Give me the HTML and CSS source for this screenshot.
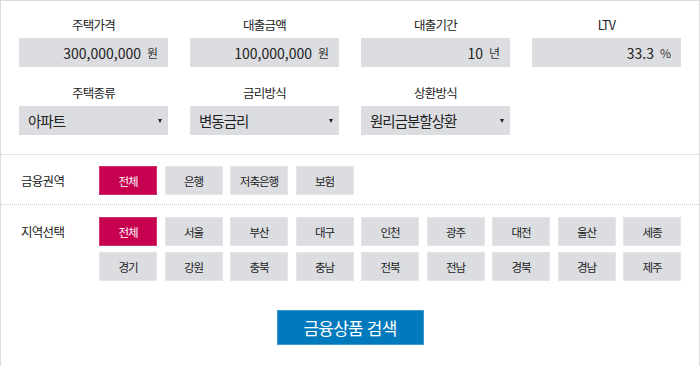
FILE: index.html
```html
<!DOCTYPE html>
<html lang="ko">
<head>
    <meta charset="UTF-8">
    <meta name="viewport" content="width=device-width, initial-scale=1.0">
    <title>대출 상품 검색</title>
    <link rel="stylesheet" href="styles.css">
</head>
<body>
    <div class="search-box">
        <!-- 조건 입력 -->
        <div class="conditions">
            <div class="field">
                <label>주택가격</label>
                <div class="input-box"><input type="text" value="300,000,000"><span class="unit">원</span></div>
            </div>
            <div class="field">
                <label>대출금액</label>
                <div class="input-box"><input type="text" value="100,000,000"><span class="unit">원</span></div>
            </div>
            <div class="field">
                <label>대출기간</label>
                <div class="input-box"><input type="text" value="10"><span class="unit">년</span></div>
            </div>
            <div class="field">
                <label>LTV</label>
                <div class="input-box"><input type="text" value="33.3" readonly><span class="unit">%</span></div>
            </div>
            <div class="field">
                <label>주택종류</label>
                <div class="select-box">
                    <select>
                        <option>아파트</option>
                        <option>단독주택</option>
                        <option>연립/다세대</option>
                    </select>
                </div>
            </div>
            <div class="field">
                <label>금리방식</label>
                <div class="select-box">
                    <select>
                        <option>변동금리</option>
                        <option>고정금리</option>
                    </select>
                </div>
            </div>
            <div class="field">
                <label>상환방식</label>
                <div class="select-box">
                    <select>
                        <option>원리금분할상환</option>
                        <option>원금분할상환</option>
                        <option>만기일시상환</option>
                    </select>
                </div>
            </div>
        </div>

        <!-- 금융권역 -->
        <div class="filter">
            <div class="filter-title">금융권역</div>
            <div class="chips">
                <button class="chip active">전체</button>
                <button class="chip">은행</button>
                <button class="chip">저축은행</button>
                <button class="chip">보험</button>
            </div>
        </div>

        <!-- 지역선택 -->
        <div class="filter last">
            <div class="filter-title">지역선택</div>
            <div class="chips">
                <button class="chip active">전체</button>
                <button class="chip">서울</button>
                <button class="chip">부산</button>
                <button class="chip">대구</button>
                <button class="chip">인천</button>
                <button class="chip">광주</button>
                <button class="chip">대전</button>
                <button class="chip">울산</button>
                <button class="chip">세종</button>
                <button class="chip">경기</button>
                <button class="chip">강원</button>
                <button class="chip">충북</button>
                <button class="chip">충남</button>
                <button class="chip">전북</button>
                <button class="chip">전남</button>
                <button class="chip">경북</button>
                <button class="chip">경남</button>
                <button class="chip">제주</button>
            </div>
        </div>

        <div class="search-area">
            <button class="search-btn">금융상품 검색</button>
        </div>
    </div>
</body>
</html>
```

FILE: styles.css
```css
body {
    margin: 0;
    font-family: "Noto Sans CJK KR", "Noto Sans", sans-serif;
    color: #222;
    background-color: white;
}
.search-box {
    width: 700px;
    min-height: 366px;
    box-sizing: border-box;
    border: 1px solid #dcdcdc;
    border-bottom: none;
}
.conditions {
    display: grid;
    grid-template-columns: repeat(4, 149px);
    column-gap: 22px;
    row-gap: 16px;
    padding: 14px 18px 19px;
    border-bottom: 1px dotted #c8c8c8;
}
.field label {
    display: block;
    height: 20px;
    line-height: 20px;
    margin-bottom: 3px;
    text-align: center;
    font-size: 12.5px;
    letter-spacing: -0.7px;
    color: #222;
}
.input-box {
    display: flex;
    align-items: center;
    height: 29px;
    padding: 0 10px 0 8px;
    background-color: #dcdde1;
}
.input-box input {
    flex: 1;
    min-width: 0;
    border: none;
    background: none;
    padding: 0;
    text-align: right;
    font-family: inherit;
    font-size: 14px;
    color: #222;
    outline: none;
}
.unit {
    margin-left: 6px;
    font-size: 12px;
    color: #333;
}
.select-box {
    position: relative;
    height: 29px;
    background-color: #dcdde1;
}
.select-box select {
    width: 100%;
    height: 29px;
    padding: 0 20px 0 9px;
    border: none;
    background: none;
    -webkit-appearance: none;
    appearance: none;
    font-family: inherit;
    font-size: 14.5px;
    letter-spacing: -1px;
    color: #222;
    outline: none;
}
/* 작은 화살표 */
.select-box::after {
    content: "";
    position: absolute;
    right: 6px;
    top: 13px;
    border-left: 2px solid transparent;
    border-right: 2px solid transparent;
    border-top: 4px solid #222;
    pointer-events: none;
}
.filter {
    display: flex;
    padding: 11px 18px 9px;
    border-bottom: 1px dotted #c8c8c8;
}
.filter.last {
    padding-top: 12px;
    padding-bottom: 0;
    border-bottom: none;
}
.filter-title {
    width: 78px;
    padding-left: 2px;
    line-height: 29px;
    font-size: 12.5px;
    letter-spacing: -0.7px;
}
.chips {
    display: grid;
    grid-template-columns: repeat(9, 58px);
    column-gap: 7.5px;
    row-gap: 6px;
}
.chip {
    height: 29px;
    padding: 0;
    border: 1px solid #e4e5e8;
    background-color: #dcdde1;
    font-family: inherit;
    font-size: 11.5px;
    letter-spacing: -1px;
    color: #222;
    cursor: pointer;
}
.chip.active {
    background-color: #c7004f;
    border-color: #d0306f;
    color: white;
}
.search-area {
    padding-top: 29px;
    text-align: center;
}
.search-btn {
    width: 147px;
    height: 35px;
    border: 1px solid #3b98d2;
    background-color: #0179bd;
    color: white;
    font-family: inherit;
    font-size: 17px;
    letter-spacing: -0.8px;
    cursor: pointer;
}
```
